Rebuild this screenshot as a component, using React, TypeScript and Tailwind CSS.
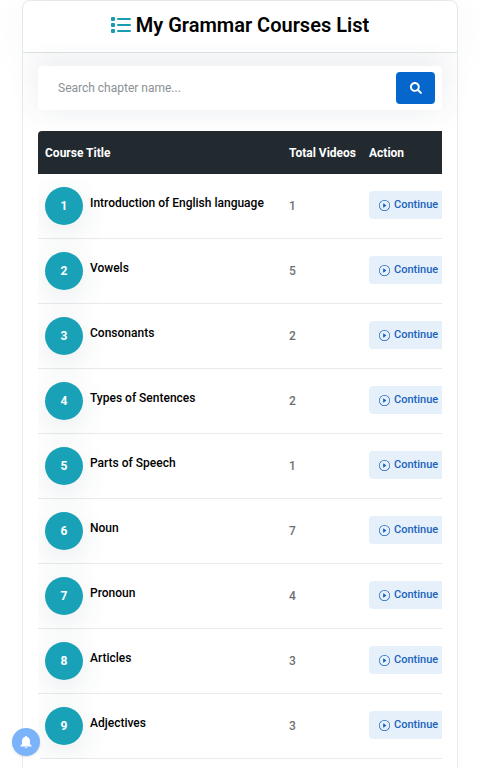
import { FaSearch } from "react-icons/fa";
import { BsPlayCircle } from "react-icons/bs";

const courses = [
  { title: "Introduction of English language", videos: 1 },
  { title: "Vowels", videos: 5 },
  { title: "Consonants", videos: 2 },
  { title: "Types of Sentences", videos: 2 },
  { title: "Parts of Speech", videos: 1 },
  { title: "Noun", videos: 7 },
  { title: "Pronoun", videos: 4 },
  { title: "Articles", videos: 3 },
  { title: "Adjectives", videos: 3 },
];

function ListIcon() {
  return (
    <svg viewBox="0 0 20 18" className="h-[18px] w-5 fill-[#1a9cb0]">
      <rect x="0" y="1" width="4" height="4" rx="1" />
      <rect x="0" y="7" width="4" height="4" rx="1" />
      <rect x="0" y="13" width="4" height="4" rx="1" />
      <rect x="6" y="2" width="14" height="2" rx="1" />
      <rect x="6" y="8" width="14" height="2" rx="1" />
      <rect x="6" y="14" width="14" height="2" rx="1" />
    </svg>
  );
}

export default function App() {
  return (
    <main className="h-screen overflow-hidden bg-white px-[22px] font-['Roboto',sans-serif] text-black">

      {/* CARD */}
      <section className="rounded-t-lg border border-b-0 border-[#e9eaec]">

        {/* TITLE */}
        <header className="flex h-[52px] items-center justify-center gap-[5px] border-b border-[#dfe2e4] pb-1 shadow-[0_8px_40px_rgba(51,73,94,0.05)]">
          <ListIcon />
          <h1 className="text-xl font-semibold">My Grammar Courses List</h1>
        </header>

        <div className="px-[15px] pt-[13px] pb-8">

          {/* SEARCH */}
          <form
            className="relative flex h-11 items-center rounded bg-white pr-[7px] pl-5 shadow-[0_0_30px_rgba(51,73,94,0.1)]"
            onSubmit={(e) => e.preventDefault()}
          >
            <input
              type="text"
              aria-label="Search chapter name"
              placeholder="Search chapter name..."
              className="min-w-0 flex-1 text-xs outline-none placeholder:text-[#8c9094]"
            />
            <button
              type="submit"
              aria-label="Search"
              className="flex h-8 w-[39px] items-center justify-center rounded bg-[#0567cc] text-white"
            >
              <FaSearch className="size-3" />
            </button>
          </form>

          {/* COURSES */}
          <div className="relative mt-[21px] overflow-hidden rounded-l bg-white">
            <table className="w-[calc(100%+18px)] table-fixed border-separate border-spacing-0 text-xs">
              <thead className="bg-[#22292f] text-left text-white">
                <tr className="h-[43px]">
                  <th className="pl-[7px] font-bold">Course Title</th>
                  <th className="w-20 pl-[7px] font-bold">Total Videos</th>
                  <th className="w-[98px] pl-[7px] font-bold">Action</th>
                </tr>
              </thead>
              <tbody>
                {courses.map((course, i) => (
                  <tr key={course.title} className="h-[65px] *:border-b *:border-[#e8eaec]">
                    <td className="pl-[7px]">
                      <div className="flex items-start gap-[7px]">
                        <span className="flex size-[38px] shrink-0 items-center justify-center rounded-full bg-[#19a2b7] font-bold text-white shadow-[0_8px_30px_rgba(51,73,94,0.12)]">
                          {i + 1}
                        </span>
                        <span className="mt-2 whitespace-nowrap font-medium">{course.title}</span>
                      </div>
                    </td>
                    <td className="pl-[7px] font-medium text-[#6b6f73]">{course.videos}</td>
                    <td className="pl-[7px] pb-[2px]">
                      <button className="flex h-7 w-[84px] items-center gap-1 rounded-sm bg-[#e6f0fa] pl-[10px] text-[11px] font-medium text-[#1a63bd]">
                        <BsPlayCircle className="size-[11px]" />
                        Continue
                      </button>
                    </td>
                  </tr>
                ))}
              </tbody>
            </table>
          </div>
        </div>
      </section>

      {/* NOTIFICATIONS */}
      <button
        aria-label="Notifications"
        className="fixed bottom-3 left-3 flex size-7 items-center justify-center rounded-full bg-[#7ab3fa] shadow-sm"
      >
        <svg viewBox="0 0 24 24" className="size-[14px] fill-white">
          <path d="M12 1.500a2 2 0 0 0-2 2C6.800 4.400 5.200 7 5.200 10v5.500L2.500 18.300v1.200h19v-1.200l-2.700-2.800V10c0-3-1.600-5.600-4.800-6.500a2 2 0 0 0-2-2zM9.500 21a2.600 2.600 0 0 0 5 0z" />
        </svg>
      </button>
    </main>
  );
}
